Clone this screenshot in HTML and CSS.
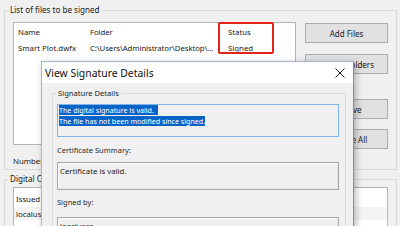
FILE: index.html
```html
<!DOCTYPE html>
<html>
<head>
<meta charset="utf-8">
<link rel="stylesheet" href="styles.css">
</head>
<body>
<div class="app">
  <fieldset class="group group-files">
    <legend>List of files to be signed</legend>
    <div class="files-row">
      <div class="listbox files-list">
        <div class="lv-row lv-head">
          <span class="c-name">Name</span><span class="c-folder">Folder</span><span class="c-status">Status</span>
        </div>
        <div class="lv-row lv-item">
          <span class="c-name">Smart Plot.dwfx</span><span class="c-folder">C:\Users\Administrator\Desktop\...</span><span class="c-status">Signed</span>
        </div>
      </div>
      <div class="buttons">
        <button class="btn">Add Files</button>
        <button class="btn btn-gap1">Search Folders</button>
        <button class="btn btn-gap2">Remove</button>
        <button class="btn btn-gap3">Remove All</button>
      </div>
    </div>
    <div class="count">Number of files: 1</div>
  </fieldset>
  <fieldset class="group group-cert">
    <legend>Digital Certificate</legend>
    <div class="listbox cert-list">
      <div class="lv-row cert-head"><span>Issued to</span></div>
      <div class="lv-row cert-item"><span>localuser</span></div>
    </div>
  </fieldset>
</div>

<div class="annot"></div>

<div class="dialog">
  <div class="titlebar">
    <span class="title">View Signature Details</span>
    <svg class="close" width="10" height="10" viewBox="0 0 10 10"><path d="M0.5 0.5 L9.5 9.5 M9.5 0.5 L0.5 9.5" stroke="#222" stroke-width="1" fill="none"/></svg>
  </div>
  <div class="dlg-body">
    <fieldset class="group sig-group">
      <legend>Signature Details</legend>
      <div class="sig-text">
        <div class="sel-line"><span class="sel sel-1">The digital signature is valid.</span></div>
        <div class="sel-line"><span class="sel">The file has not been modified since signed.</span></div>
      </div>
      <div class="field-label first">Certificate Summary:</div>
      <div class="sunken summary">Certificate is valid.</div>
      <div class="field-label">Signed by:</div>
      <div class="sunken signer">localuser</div>
    </fieldset>
  </div>
</div>
</body>
</html>
```

FILE: styles.css
```css
html, body {
  margin: 0;
  padding: 0;
}
body {
  width: 400px;
  height: 226px;
  overflow: hidden;
  background: #f0f0f0;
  font-family: "Noto Sans", "Open Sans", sans-serif;
  font-size: 7.8px;
  color: #1a1a1a;
  position: relative;
}
.app {
  width: 400px;
  box-sizing: border-box;
  padding: 3px 3px 0 4px;
}
.group {
  margin: 0;
  border: 1px solid #dadada;
  min-width: 0;
}
.group legend {
  padding: 0 2px;
  margin-left: -5px;
  line-height: 14px;
  font-size: 8.1px;
}
.group-files {
  padding: 5px 7px 1px 8px;
}
.files-row {
  display: flex;
  gap: 9px;
}
.listbox {
  background: #fff;
  border: 1px solid #b4b4b4;
  box-sizing: border-box;
}
.files-list {
  width: 283px;
  height: 123px;
}
.lv-row {
  display: flex;
  align-items: center;
  white-space: nowrap;
}
.lv-head {
  height: 18px;
}
.lv-item {
  height: 14px;
}
.c-name {
  width: 71px;
  padding-left: 4px;
  box-sizing: border-box;
}
.c-folder {
  width: 139px;
  padding-left: 5px;
  box-sizing: border-box;
  overflow: hidden;
  letter-spacing: -0.1px;
}
.c-status {
  padding-left: 4px;
}
.buttons {
  width: 83px;
  display: flex;
  flex-direction: column;
  padding-top: 1px;
}
.btn {
  height: 20px;
  margin: 0;
  padding: 0;
  background: #e1e1e1;
  border: 1px solid #adadad;
  font: inherit;
  font-size: 8px;
  color: #1a1a1a;
}
.btn-gap1 { margin-top: 11px; }
.btn-gap2 { margin-top: 25px; }
.btn-gap3 { margin-top: 10px; }
.count {
  line-height: 14px;
  margin-top: 5px;
}
.group-cert {
  margin-top: 2px;
  padding: 1px 8px 8px 8px;
}
.cert-list {
  width: 375px;
  height: 60px;
}
.cert-head {
  height: 19px;
  padding: 2px 0 0 2px;
  box-sizing: border-box;
}
.cert-item {
  height: 13px;
  padding-left: 2px;
  background: #f4f4f4;
}

.annot {
  position: absolute;
  left: 218px;
  top: 22px;
  width: 56px;
  height: 32px;
  box-sizing: border-box;
  border: 2px solid #e2231a;
  border-radius: 2px;
}

.dialog {
  position: absolute;
  left: 41px;
  top: 61px;
  width: 313px;
  height: 200px;
  box-sizing: border-box;
  background: #f0f0f0;
  border: 1px solid;
  border-color: #a8b8cc #5f96d6 #5f96d6 #a8b8cc;
  box-shadow: 2px 2px 7px rgba(0, 0, 0, 0.28);
}
.titlebar {
  height: 21px;
  background: #fff;
  display: flex;
  align-items: center;
  justify-content: space-between;
  padding: 0 8px 0 3px;
}
.title {
  font-size: 10.4px;
  color: #111;
}
.close {
  display: block;
}
.dlg-body {
  padding: 3px 7px 0 10px;
  font-size: 7.5px;
}
.sig-group {
  padding: 4px 6px 10px 4px;
  border-color: #dcdcdc;
}
.sig-group legend {
  margin-left: -1px;
  font-size: 7.6px;
}
.sig-text {
  height: 33px;
  box-sizing: border-box;
  border: 1px solid #7eb4ea;
  padding: 0 1px;
  line-height: 11px;
  font-size: 7.1px;
}
.sel {
  background: #0a64c8;
  color: #fff;
}
.sel-1 {
  padding-right: 4px;
}
.field-label {
  line-height: 14px;
  margin-top: 5px;
  color: #2a2a2a;
}
.field-label.first {
  margin-top: 6px;
}
.sunken {
  box-sizing: border-box;
  border: 1px solid #a6a6a6;
  box-shadow: inset 1px 1px 0 #fcfcfc, inset -1px -1px 0 #e6e6e6;
  padding: 1px 2px;
  line-height: 14px;
  font-size: 7.8px;
}
.summary {
  margin-top: 5px;
  height: 28px;
}
.signer {
  margin-top: 8px;
  height: 28px;
}
```
